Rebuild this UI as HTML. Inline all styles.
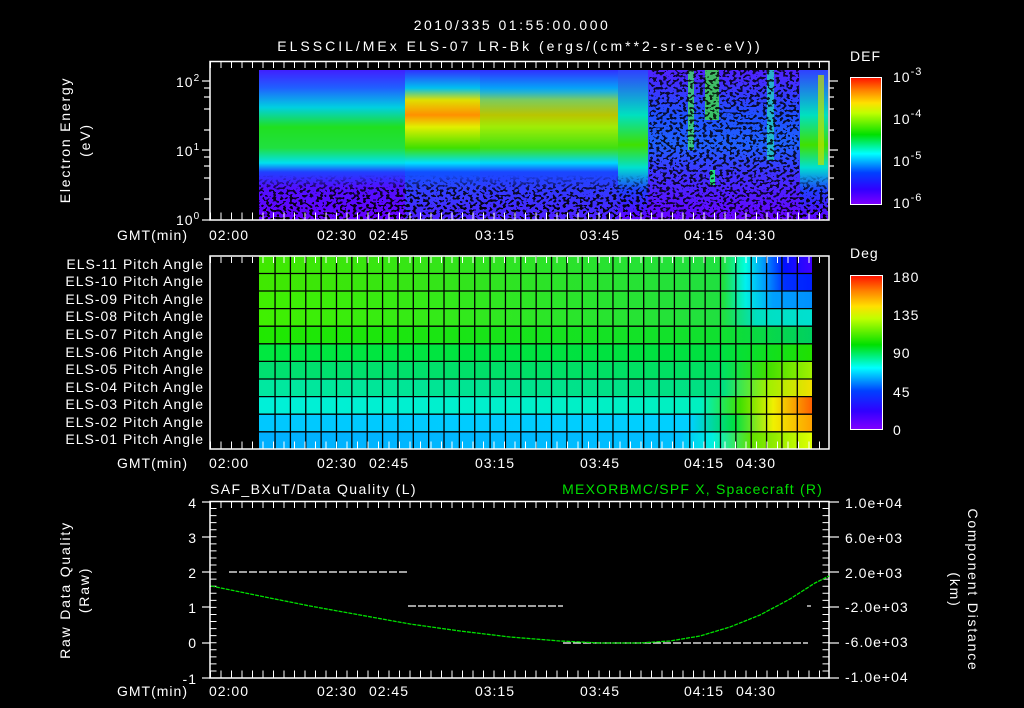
<!DOCTYPE html>
<html><head><meta charset="utf-8"><style>
html,body{margin:0;padding:0;background:#000;}
svg{display:block;}
text{font-family:"Liberation Sans",sans-serif;fill:#fff;font-size:14px;letter-spacing:1px;}
</style></head><body>
<svg width="1024" height="708" viewBox="0 0 1024 708" xmlns="http://www.w3.org/2000/svg">
<defs>
<linearGradient id="cb" x1="0" y1="1" x2="0" y2="0">
<stop offset="0" stop-color="#8000ff"/><stop offset="0.12" stop-color="#3000ff"/><stop offset="0.25" stop-color="#0040ff"/>
<stop offset="0.4" stop-color="#00ffff"/><stop offset="0.55" stop-color="#00e000"/><stop offset="0.72" stop-color="#c0ff00"/>
<stop offset="0.8" stop-color="#ffe000"/><stop offset="0.9" stop-color="#ff8000"/><stop offset="1" stop-color="#ff1000"/>
</linearGradient>
<linearGradient id="s1" x1="0" y1="70" x2="0" y2="220" gradientUnits="userSpaceOnUse">
<stop offset="0" stop-color="#4020ff"/><stop offset="0.12" stop-color="#2060ff"/><stop offset="0.25" stop-color="#00d0e0"/>
<stop offset="0.38" stop-color="#20e020"/><stop offset="0.52" stop-color="#20e040"/><stop offset="0.62" stop-color="#00e0f0"/>
<stop offset="0.68" stop-color="#2040ff"/><stop offset="0.78" stop-color="#5010ff"/><stop offset="1" stop-color="#6800ff"/>
</linearGradient>
<linearGradient id="s2" x1="0" y1="70" x2="0" y2="220" gradientUnits="userSpaceOnUse">
<stop offset="0" stop-color="#3030ff"/><stop offset="0.12" stop-color="#00c0f0"/><stop offset="0.2" stop-color="#e0e000"/>
<stop offset="0.3" stop-color="#ff9000"/><stop offset="0.38" stop-color="#e0f000"/><stop offset="0.52" stop-color="#40e000"/>
<stop offset="0.62" stop-color="#00e0ff"/><stop offset="0.68" stop-color="#1050ff"/><stop offset="0.8" stop-color="#3040ff"/><stop offset="1" stop-color="#5020ff"/>
</linearGradient>
<linearGradient id="s3" x1="0" y1="70" x2="0" y2="220" gradientUnits="userSpaceOnUse">
<stop offset="0" stop-color="#3030ff"/><stop offset="0.15" stop-color="#00a0ff"/><stop offset="0.3" stop-color="#80f000"/>
<stop offset="0.52" stop-color="#40e020"/><stop offset="0.62" stop-color="#00d0ff"/><stop offset="0.68" stop-color="#2040ff"/><stop offset="1" stop-color="#5020ff"/>
</linearGradient>
<linearGradient id="s4" x1="0" y1="70" x2="0" y2="220" gradientUnits="userSpaceOnUse">
<stop offset="0" stop-color="#5020ff"/><stop offset="0.3" stop-color="#2050ff"/><stop offset="0.5" stop-color="#2060ff"/>
<stop offset="0.7" stop-color="#4030ff"/><stop offset="1" stop-color="#6800ff"/>
</linearGradient>
<linearGradient id="s5" x1="0" y1="70" x2="0" y2="220" gradientUnits="userSpaceOnUse">
<stop offset="0" stop-color="#3040ff"/><stop offset="0.3" stop-color="#00e0c0"/><stop offset="0.5" stop-color="#40e000"/>
<stop offset="0.65" stop-color="#00e0d0"/><stop offset="0.8" stop-color="#2040ff"/><stop offset="1" stop-color="#6000ff"/>
</linearGradient>
<filter id="spk" x="0" y="0" width="100%" height="100%">
<feTurbulence type="fractalNoise" baseFrequency="0.3 0.4" numOctaves="1" seed="7"/>
<feColorMatrix type="matrix" values="0 0 0 0 0  0 0 0 0 0  0 0 0 0 0  0 0 0 -9 4.5"/>
<feComponentTransfer><feFuncA type="discrete" tableValues="0 1"/></feComponentTransfer>
</filter>
<linearGradient id="fadeB" x1="0" y1="0" x2="0" y2="1"><stop offset="0" stop-color="#fff" stop-opacity="0"/><stop offset="0.7" stop-color="#fff" stop-opacity="0"/><stop offset="0.8" stop-color="#fff" stop-opacity="0.8"/><stop offset="1" stop-color="#fff" stop-opacity="1"/></linearGradient>
<mask id="mB"><rect x="259" y="70" width="390" height="150" fill="url(#fadeB)"/><rect x="649" y="70" width="150" height="150" fill="#fff" fill-opacity="0.8"/><rect x="799" y="70" width="30" height="150" fill="url(#fadeB)"/></mask>
<clipPath id="c1"><rect x="259" y="70" width="569" height="150"/></clipPath>
<linearGradient id="r1" x1="259" x2="812" gradientUnits="userSpaceOnUse"><stop offset="0" stop-color="#40e800"/><stop offset="0.84" stop-color="#20e040"/><stop offset="0.88" stop-color="#00ffe0"/><stop offset="0.92" stop-color="#0080ff"/><stop offset="0.95" stop-color="#0010ff"/><stop offset="1" stop-color="#4000ff"/></linearGradient>
<linearGradient id="r2" x1="259" x2="812" gradientUnits="userSpaceOnUse"><stop offset="0" stop-color="#40e800"/><stop offset="0.84" stop-color="#20e040"/><stop offset="0.88" stop-color="#00f0f0"/><stop offset="0.92" stop-color="#0090ff"/><stop offset="0.95" stop-color="#0030ff"/><stop offset="1" stop-color="#0020ff"/></linearGradient>
<linearGradient id="r3" x1="259" x2="812" gradientUnits="userSpaceOnUse"><stop offset="0" stop-color="#40f000"/><stop offset="0.84" stop-color="#20e040"/><stop offset="0.88" stop-color="#00f0e0"/><stop offset="0.93" stop-color="#00a0ff"/><stop offset="1" stop-color="#0090ff"/></linearGradient>
<linearGradient id="r4" x1="259" x2="812" gradientUnits="userSpaceOnUse"><stop offset="0" stop-color="#40f000"/><stop offset="0.84" stop-color="#20e040"/><stop offset="0.9" stop-color="#00e0c0"/><stop offset="1" stop-color="#00e0d0"/></linearGradient>
<linearGradient id="r5" x1="259" x2="812" gradientUnits="userSpaceOnUse"><stop offset="0" stop-color="#20e800"/><stop offset="0.84" stop-color="#10e030"/><stop offset="1" stop-color="#00d060"/></linearGradient>
<linearGradient id="r6" x1="259" x2="812" gradientUnits="userSpaceOnUse"><stop offset="0" stop-color="#00e840"/><stop offset="0.84" stop-color="#00e040"/><stop offset="1" stop-color="#20e000"/></linearGradient>
<linearGradient id="r7" x1="259" x2="812" gradientUnits="userSpaceOnUse"><stop offset="0" stop-color="#00e070"/><stop offset="0.84" stop-color="#00e060"/><stop offset="0.92" stop-color="#40e000"/><stop offset="1" stop-color="#a0f000"/></linearGradient>
<linearGradient id="r8" x1="259" x2="812" gradientUnits="userSpaceOnUse"><stop offset="0" stop-color="#00e8a0"/><stop offset="0.84" stop-color="#00e080"/><stop offset="0.92" stop-color="#a0f000"/><stop offset="1" stop-color="#f0e000"/></linearGradient>
<linearGradient id="r9" x1="259" x2="812" gradientUnits="userSpaceOnUse"><stop offset="0" stop-color="#00f0d8"/><stop offset="0.8" stop-color="#00f0c0"/><stop offset="0.87" stop-color="#40e000"/><stop offset="0.93" stop-color="#f0f000"/><stop offset="1" stop-color="#ff6000"/></linearGradient>
<linearGradient id="r10" x1="259" x2="812" gradientUnits="userSpaceOnUse"><stop offset="0" stop-color="#00c8ff"/><stop offset="0.78" stop-color="#00d0ff"/><stop offset="0.86" stop-color="#00e040"/><stop offset="0.93" stop-color="#f0f000"/><stop offset="1" stop-color="#ffa000"/></linearGradient>
<linearGradient id="r11" x1="259" x2="812" gradientUnits="userSpaceOnUse"><stop offset="0" stop-color="#00b0ff"/><stop offset="0.76" stop-color="#00c0ff"/><stop offset="0.82" stop-color="#00f0e0"/><stop offset="0.89" stop-color="#60e000"/><stop offset="1" stop-color="#e0ff00"/></linearGradient>
</defs>

<text x="512" y="30" text-anchor="middle" font-size="17" style="letter-spacing:2.5px">2010/335 01:55:00.000</text>
<text x="520" y="51" text-anchor="middle" font-size="17" style="letter-spacing:3px">ELSSCIL/MEx ELS-07 LR-Bk  (ergs/(cm**2-sr-sec-eV))</text>

<g clip-path="url(#c1)">
<rect x="259" y="70" width="148" height="150" fill="url(#s1)"/>
<rect x="405" y="70" width="215" height="150" fill="url(#s2)"/>
<rect x="480" y="70" width="140" height="150" fill="url(#s3)" opacity="0.55"/>
<rect x="618" y="70" width="30" height="150" fill="url(#s5)"/>
<rect x="648" y="70" width="152" height="150" fill="url(#s4)"/>
<rect x="688" y="70" width="6" height="80" fill="#40e060" opacity="0.8"/>
<rect x="705" y="70" width="14" height="50" fill="#40e040" opacity="0.8"/>
<rect x="767" y="70" width="7" height="90" fill="#20d0c0" opacity="0.8"/>
<rect x="710" y="170" width="5" height="15" fill="#20e080"/>
<rect x="800" y="70" width="28" height="150" fill="url(#s5)"/>
<rect x="818" y="75" width="6" height="90" fill="#c0e000" opacity="0.7"/>
<rect x="259" y="70" width="569" height="150" filter="url(#spk)" mask="url(#mB)"/>
</g>
<rect x="210" y="61.5" width="619" height="158.5" fill="none" stroke="#fff" stroke-width="1.5"/>
<line x1="210" y1="65" x2="829" y2="65" stroke="#fff" stroke-width="6" stroke-dasharray="1 9.5"/>
<line x1="210" y1="216" x2="829" y2="216" stroke="#fff" stroke-width="7" stroke-dasharray="1 9.5"/>
<g stroke="#fff" stroke-width="1.2">
<line x1="202" y1="81" x2="210" y2="81"/><line x1="202" y1="150" x2="210" y2="150"/><line x1="202" y1="220" x2="210" y2="220"/>
<line x1="204" y1="88" x2="210" y2="88"/><line x1="204" y1="97" x2="210" y2="97"/><line x1="204" y1="109" x2="210" y2="109"/><line x1="204" y1="130" x2="210" y2="130"/>
<line x1="204" y1="157" x2="210" y2="157"/><line x1="204" y1="166" x2="210" y2="166"/><line x1="204" y1="178" x2="210" y2="178"/><line x1="204" y1="199" x2="210" y2="199"/>
<line x1="829" y1="81" x2="838" y2="81"/><line x1="829" y1="150" x2="838" y2="150"/><line x1="829" y1="88" x2="834" y2="88"/><line x1="829" y1="97" x2="834" y2="97"/><line x1="829" y1="109" x2="834" y2="109"/><line x1="829" y1="130" x2="834" y2="130"/><line x1="829" y1="157" x2="834" y2="157"/><line x1="829" y1="166" x2="834" y2="166"/><line x1="829" y1="178" x2="834" y2="178"/><line x1="829" y1="199" x2="834" y2="199"/>
</g>
<text x="176" y="87">10<tspan dy="-6" font-size="10">2</tspan></text>
<text x="176" y="156">10<tspan dy="-6" font-size="10">1</tspan></text>
<text x="176" y="225">10<tspan dy="-6" font-size="10">0</tspan></text>
<text transform="translate(70,140) rotate(-90)" text-anchor="middle" style="letter-spacing:1.8px">Electron Energy</text>
<text transform="translate(90,140) rotate(-90)" text-anchor="middle" style="letter-spacing:1.8px">(eV)</text>
<text x="850" y="61" font-size="16">DEF</text>
<rect x="850.5" y="77.5" width="31" height="127" fill="url(#cb)" stroke="#fff"/>
<text x="893" y="82" font-size="16">10<tspan dy="-7" font-size="11">-3</tspan></text>
<text x="893" y="124" font-size="16">10<tspan dy="-7" font-size="11">-4</tspan></text>
<text x="893" y="166" font-size="16">10<tspan dy="-7" font-size="11">-5</tspan></text>
<text x="893" y="208" font-size="16">10<tspan dy="-7" font-size="11">-6</tspan></text>

<g>
<text x="117" y="240">GMT(min)</text>
<text x="117" y="468">GMT(min)</text>
<text x="117" y="696">GMT(min)</text>
<g id="tl" style="letter-spacing:1.5px">
<text x="229" y="240" text-anchor="middle">02:00</text><text x="337" y="240" text-anchor="middle">02:30</text><text x="389" y="240" text-anchor="middle">02:45</text>
<text x="495" y="240" text-anchor="middle">03:15</text><text x="600" y="240" text-anchor="middle">03:45</text><text x="704" y="240" text-anchor="middle">04:15</text><text x="756" y="240" text-anchor="middle">04:30</text>
</g>
<use href="#tl" y="228"/><use href="#tl" y="456"/>
</g>

<g>
<rect x="259" y="256" width="553" height="18" fill="url(#r1)"/>
<rect x="259" y="273.5" width="553" height="18" fill="url(#r2)"/>
<rect x="259" y="291" width="553" height="18" fill="url(#r3)"/>
<rect x="259" y="308.6" width="553" height="18" fill="url(#r4)"/>
<rect x="259" y="326.2" width="553" height="18" fill="url(#r5)"/>
<rect x="259" y="343.8" width="553" height="18" fill="url(#r6)"/>
<rect x="259" y="361.4" width="553" height="18" fill="url(#r7)"/>
<rect x="259" y="379" width="553" height="18" fill="url(#r8)"/>
<rect x="259" y="396.6" width="553" height="18" fill="url(#r9)"/>
<rect x="259" y="414.2" width="553" height="18" fill="url(#r10)"/>
<rect x="259" y="431.8" width="553" height="17" fill="url(#r11)"/>
</g>
<g stroke="#000" stroke-width="1.3">
<line x1="259" y1="273.5" x2="812" y2="273.5"/>
<line x1="259" y1="291" x2="812" y2="291"/><line x1="259" y1="308.6" x2="812" y2="308.6"/><line x1="259" y1="326.2" x2="812" y2="326.2"/>
<line x1="259" y1="343.8" x2="812" y2="343.8"/><line x1="259" y1="361.4" x2="812" y2="361.4"/><line x1="259" y1="379" x2="812" y2="379"/>
<line x1="259" y1="396.6" x2="812" y2="396.6"/><line x1="259" y1="414.2" x2="812" y2="414.2"/><line x1="259" y1="431.8" x2="812" y2="431.8"/>
<line x1="274.4" y1="352" x2="812" y2="352" stroke-width="193" stroke-dasharray="1.3 14.06"/>
</g>
<rect x="210" y="256" width="619" height="193" fill="none" stroke="#fff" stroke-width="1.5"/>
<line x1="210" y1="260" x2="829" y2="260" stroke="#fff" stroke-width="6" stroke-dasharray="1 9.5"/>
<line x1="210" y1="445" x2="829" y2="445" stroke="#fff" stroke-width="7" stroke-dasharray="1 9.5"/>
<g text-anchor="end" font-size="13" style="letter-spacing:1px">
<text x="204" y="269">ELS-11 Pitch Angle</text><text x="204" y="286">ELS-10 Pitch Angle</text><text x="204" y="304">ELS-09 Pitch Angle</text>
<text x="204" y="321">ELS-08 Pitch Angle</text><text x="204" y="339">ELS-07 Pitch Angle</text><text x="204" y="357">ELS-06 Pitch Angle</text>
<text x="204" y="374">ELS-05 Pitch Angle</text><text x="204" y="392">ELS-04 Pitch Angle</text><text x="204" y="409">ELS-03 Pitch Angle</text>
<text x="204" y="427">ELS-02 Pitch Angle</text><text x="204" y="444">ELS-01 Pitch Angle</text>
</g>
<text x="850" y="258" font-size="16">Deg</text>
<rect x="850.5" y="275.5" width="32" height="154" fill="url(#cb)" stroke="#fff"/>
<g font-size="16"><text x="893" y="282">180</text><text x="893" y="320">135</text><text x="893" y="358">90</text><text x="893" y="397">45</text><text x="893" y="435">0</text></g>

<text x="210" y="494" font-size="15" style="letter-spacing:1.4px">SAF_BXuT/Data Quality (L)</text>
<text x="823" y="494" font-size="15" text-anchor="end" style="fill:#00e000;letter-spacing:1.2px">MEXORBMC/SPF X, Spacecraft (R)</text>
<rect x="210" y="501.5" width="619" height="176.5" fill="none" stroke="#fff" stroke-width="1.5"/>
<line x1="210" y1="505" x2="829" y2="505" stroke="#fff" stroke-width="6" stroke-dasharray="1 9.5"/>
<line x1="210" y1="674" x2="829" y2="674" stroke="#fff" stroke-width="7" stroke-dasharray="1 9.5"/>
<line x1="213" y1="501" x2="213" y2="678" stroke="#fff" stroke-width="7" stroke-dasharray="1 6.06"/>
<line x1="826" y1="501" x2="826" y2="678" stroke="#fff" stroke-width="7" stroke-dasharray="1 6.06"/>
<g stroke="#fff" stroke-width="1.2">
<line x1="202" y1="502" x2="210" y2="502"/><line x1="202" y1="537" x2="210" y2="537"/><line x1="202" y1="572" x2="210" y2="572"/><line x1="202" y1="607" x2="210" y2="607"/><line x1="202" y1="643" x2="210" y2="643"/><line x1="202" y1="678" x2="210" y2="678"/>
<line x1="829" y1="502" x2="839" y2="502"/><line x1="829" y1="537" x2="839" y2="537"/><line x1="829" y1="572" x2="839" y2="572"/><line x1="829" y1="607" x2="839" y2="607"/><line x1="829" y1="643" x2="839" y2="643"/><line x1="829" y1="678" x2="839" y2="678"/>
</g>
<g text-anchor="end" font-size="14"><text x="197" y="508">4</text><text x="197" y="543">3</text><text x="197" y="578">2</text><text x="197" y="613">1</text><text x="197" y="648">0</text><text x="197" y="684">-1</text></g>
<g font-size="13" style="letter-spacing:1.1px"><text x="845" y="508">1.0e+04</text><text x="845" y="543">6.0e+03</text><text x="845" y="578">2.0e+03</text><text x="845" y="612">-2.0e+03</text><text x="845" y="647">-6.0e+03</text><text x="845" y="682">-1.0e+04</text></g>
<text transform="translate(70,590) rotate(-90)" text-anchor="middle" style="letter-spacing:1.8px">Raw Data Quality</text>
<text transform="translate(89,590) rotate(-90)" text-anchor="middle" style="letter-spacing:1.8px">(Raw)</text>
<text transform="translate(968,590) rotate(90)" text-anchor="middle" style="letter-spacing:1.8px">Component Distance</text>
<text transform="translate(950,590) rotate(90)" text-anchor="middle" style="letter-spacing:1.8px">(km)</text>
<g stroke="#fff" stroke-width="1.2" stroke-dasharray="8 2">
<line x1="229" y1="572" x2="408" y2="572"/><line x1="408" y1="606" x2="563" y2="606"/><line x1="563" y1="643" x2="808" y2="643"/>
</g>
<line x1="807" y1="606" x2="811" y2="606" stroke="#fff" stroke-width="1.2"/>
<polyline fill="none" stroke="#00e000" stroke-width="1.3" stroke-dasharray="4 1" points="211,586 260,596 310,606 360,615 410,624 460,631 510,637 560,641 600,643 640,643 670,641 700,636 730,627 760,615 790,599 815,583 829,576"/>
</svg>
</body></html>
